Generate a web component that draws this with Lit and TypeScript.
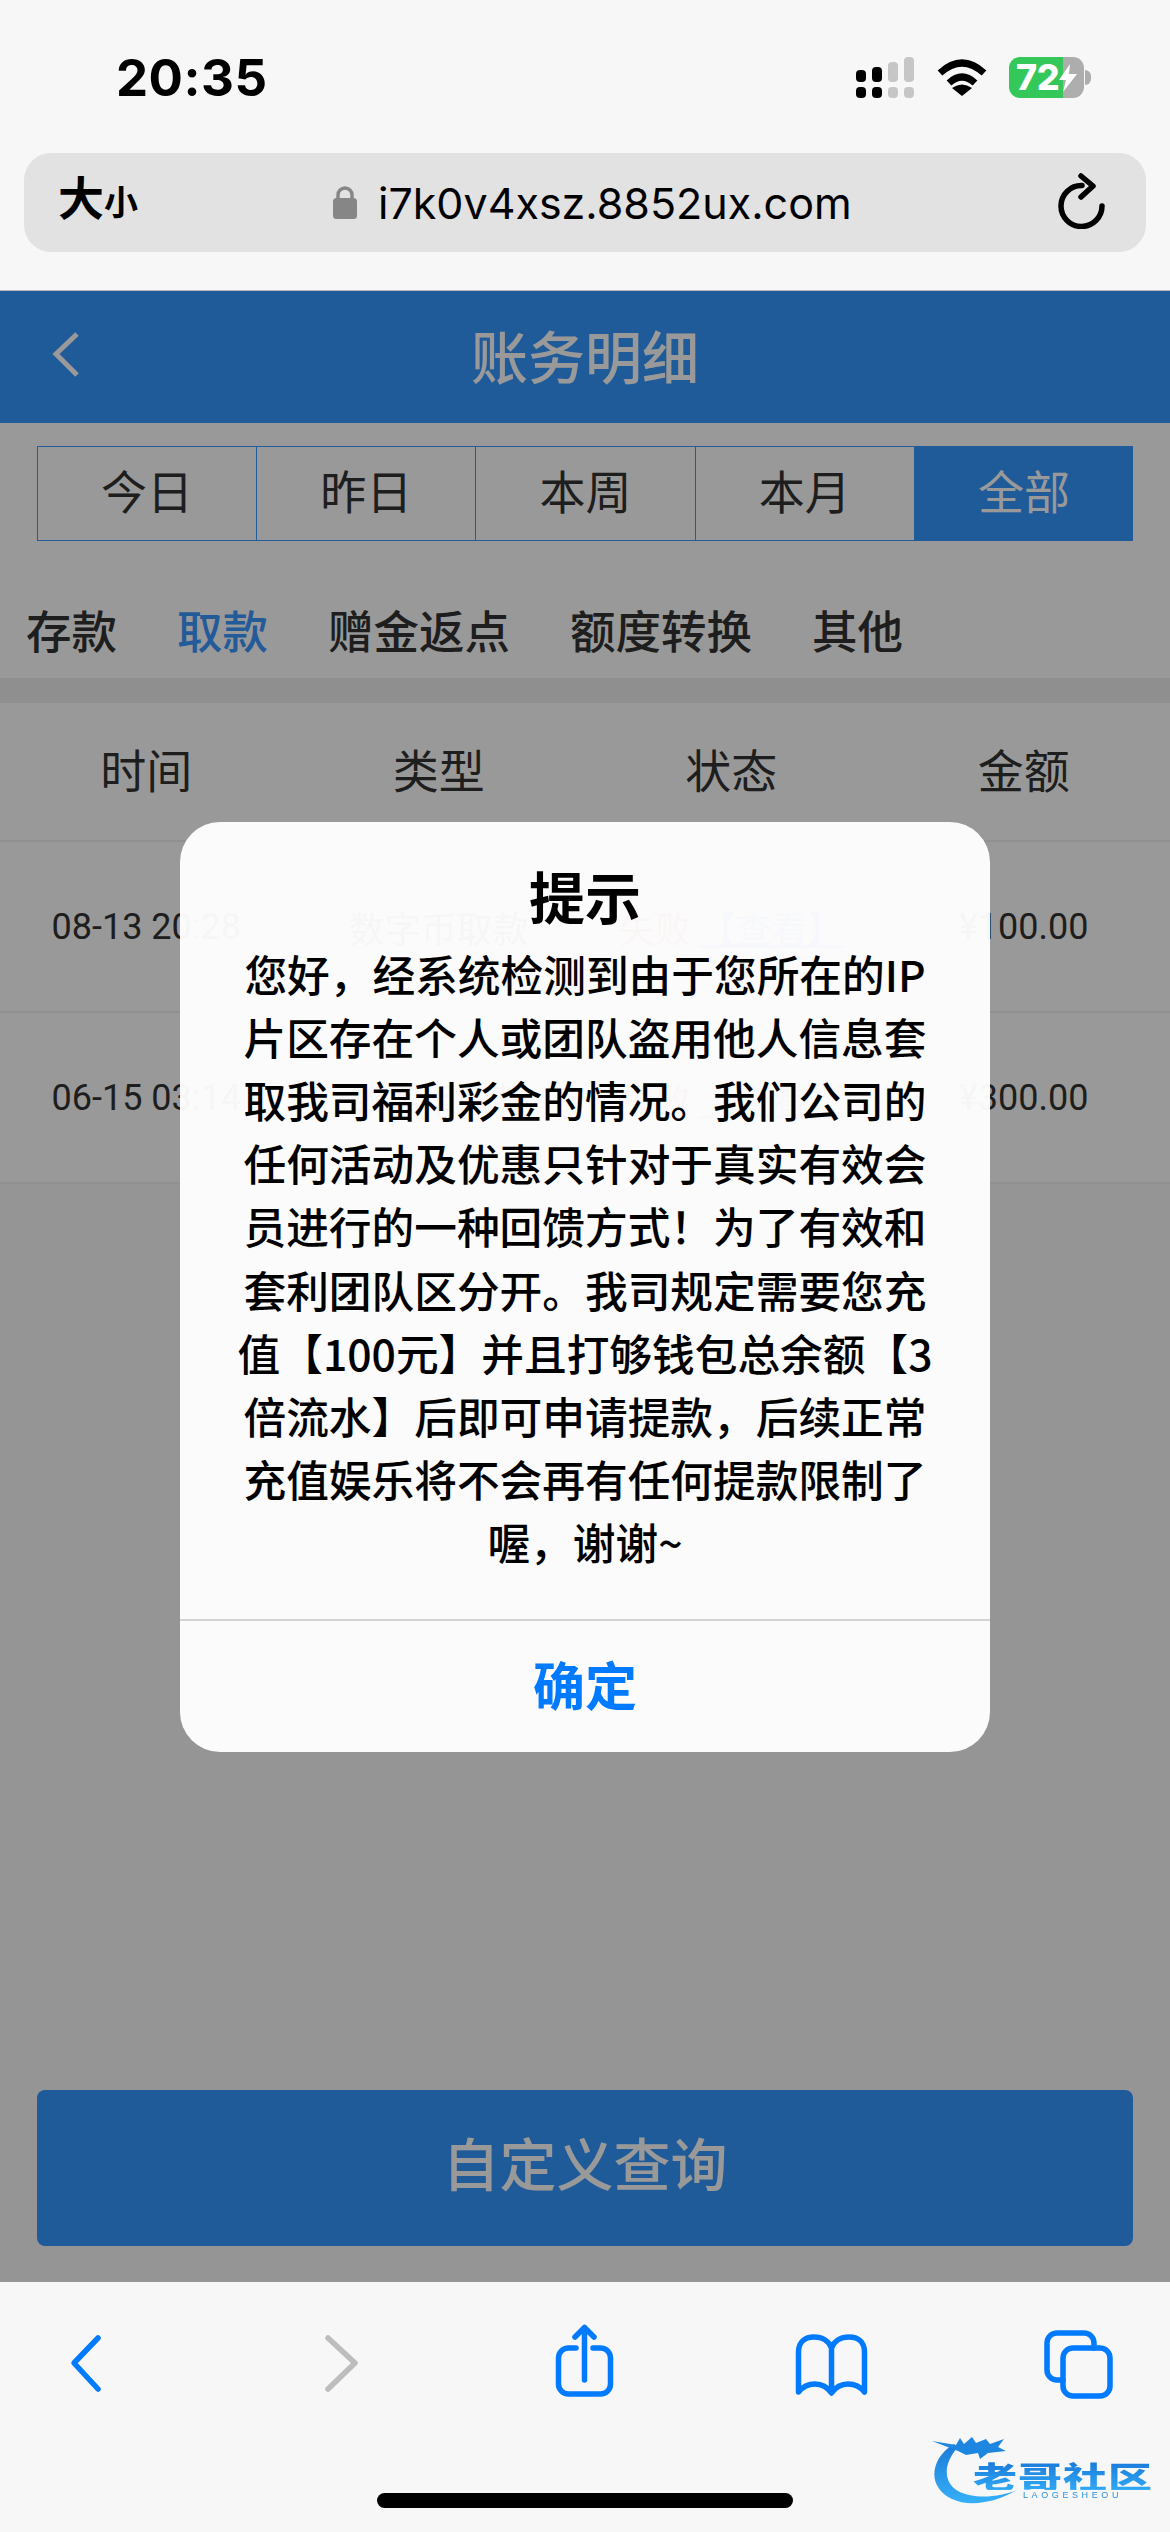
import { LitElement, html, css, svg } from "lit";
import { customElement } from "lit/decorators.js";

const PERIODS = ["今日", "昨日", "本周", "本月", "全部"];
const KINDS = ["存款", "取款", "赠金返点", "额度转换", "其他"];
const HEADS = ["时间", "类型", "状态", "金额"];
const ROWS = [
  { time: "08-13 20:28", type: "数字币取款", amount: "¥100.00" },
  { time: "06-15 03:14", type: "数字币取款", amount: "¥300.00" },
];
const LINES = [
  "您好，经系统检测到由于您所在的IP",
  "片区存在个人或团队盗用他人信息套",
  "取我司福利彩金的情况。我们公司的",
  "任何活动及优惠只针对于真实有效会",
  "员进行的一种回馈方式！为了有效和",
  "套利团队区分开。我司规定需要您充",
  "值【100元】并且打够钱包总余额【3",
  "倍流水】后即可申请提款，后续正常",
  "充值娱乐将不会再有任何提款限制了",
  "喔，谢谢~",
];
const SIGNAL = [
  { h: 12, on: true },
  { h: 15, on: true },
  { h: 20, on: false },
  { h: 25, on: false },
];

@customElement("app-root")
export class AppRoot extends LitElement {
  static styles = css`
    :host {
      display: block;
      width: 1170px;
      height: 2532px;
      overflow: hidden;
      background: #f7f7f7;
      font-family: "Noto Sans CJK SC", "Noto Sans", sans-serif;
      color: #000;
    }
    .page { display: flex; flex-direction: column; height: 2532px; }

    .chrome { height: 290px; background: #f7f7f7; flex: none; }
    .status {
      height: 153px;
      box-sizing: border-box;
      padding: 57px 79px 0 116px;
      display: flex;
      justify-content: space-between;
      align-items: flex-start;
    }
    .time {
      font-family: Inter, "Liberation Sans", sans-serif;
      font-weight: 700;
      font-size: 51px;
      line-height: 42px;
      letter-spacing: 0.5px;
    }
    .status-icons { display: flex; align-items: flex-start; gap: 23px; }
    .signal { display: flex; gap: 6px; width: 58px; }
    .sig-col { width: 10px; height: 41px; display: flex; flex-direction: column; justify-content: flex-end; gap: 5px; }
    .sig-col i { display: block; border-radius: 4px; background: #000; }
    .sig-col.off i { background: #c6c6c6; }
    .sig-col i.low { height: 11px; }
    .wifi { width: 50px; height: 37px; margin-top: 2px; }
    .battery-wrap { display: flex; align-items: center; margin-left: -1px; }
    .battery {
      width: 75px;
      height: 41px;
      border-radius: 11px;
      background: linear-gradient(90deg, #34c759 54px, #adadad 54px);
      display: flex;
      align-items: center;
      box-sizing: border-box;
      padding-left: 7px;
      color: #fff;
      font-family: Inter, "Liberation Sans", sans-serif;
      font-weight: 800;
      font-size: 36px;
      line-height: 41px;
      letter-spacing: -0.5px;
    }
    .bolt { width: 18px; height: 28px; margin-left: 0; flex: none; }
    .nub { width: 6px; height: 15px; background: #adadad; border-radius: 0 8px 8px 0; margin-left: 1px; }

    .url {
      margin: 0 24px;
      height: 99px;
      background: #e2e2e2;
      border-radius: 27px;
      display: flex;
      align-items: center;
      justify-content: space-between;
      box-sizing: border-box;
      padding: 0 41px 0 34px;
    }
    .aa { width: 82px; font-weight: 700; white-space: nowrap; line-height: 50px; margin-top: -2px; }
    .aa b { font-size: 46px; font-weight: 700; }
    .aa small { font-size: 34px; font-weight: 700; }
    .addr { display: flex; align-items: center; gap: 21px; width: 514px; }
    .lock { width: 24px; height: 33px; flex: none; }
    .addr-text {
      font-family: Inter, "Liberation Sans", sans-serif;
      font-size: 43px;
      line-height: 50px;
      font-weight: 400;
      white-space: nowrap;
      color: #000;
    }
    .reload { width: 65px; height: 56px; flex: none; margin-top: -3px; }

    .web {
      position: relative;
      flex: none;
      height: 1992px;
      display: flex;
      flex-direction: column;
      background: #f8f8f8;
      border-top: 1px solid #b9b9b9;
      box-sizing: border-box;
    }
    .head {
      height: 132px;
      background: #3496ff;
      display: flex;
      align-items: center;
      justify-content: center;
      position: relative;
      flex: none;
    }
    .head-back { position: absolute; left: 50px; top: 40px; width: 32px; height: 48px; }
    .head-title { color: #fff; font-size: 57px; line-height: 70px; font-weight: 500; margin-top: -6px; }

    .filters { background: #fff; padding: 23px 37px 13px; flex: none; margin: 0; }
    .periods { display: grid; grid-template-columns: repeat(5, 1fr); height: 95px; }
    .period {
      border: 1px solid #3b9aff;
      border-right: none;
      color: #333;
      font-size: 46px;
      display: flex;
      align-items: center;
      justify-content: center;
      box-sizing: border-box;
      line-height: 60px;
      padding-bottom: 9px;
    }
    .period.active { background: #3496ff; color: #fff; border-color: #3496ff; }
    .kinds { display: flex; gap: 60px; margin: 51px 0 0 -11px; height: 73px; align-items: center; }
    .kind { font-size: 45.5px; font-weight: 500; color: #333; white-space: nowrap; line-height: 60px; }
    .kind.active { color: #3b98ff; }
    .band { height: 25px; background: #eee; flex: none; }

    .thead, .row {
      display: grid;
      grid-template-columns: repeat(4, 1fr);
      background: #fff;
      border-bottom: 2px solid #f0f0f0;
      box-sizing: border-box;
      align-items: center;
      justify-items: center;
      color: #333;
      flex: none;
    }
    .thead { height: 139px; font-size: 46px; padding-bottom: 7px; }
    .row { height: 171px; font-size: 36px; }
    .num { font-family: Roboto, "Noto Sans", sans-serif; font-size: 36px; white-space: nowrap; }
    .state { white-space: nowrap; }
    .fail { color: #ee3b3b; }
    .link { color: #3496ff; text-decoration: underline; }

    .spacer { flex: 1; }
    .query {
      margin: 0 37px 36px;
      height: 156px;
      border-radius: 8px;
      background: #3496ff;
      color: #fff;
      font-size: 57px;
      font-weight: 500;
      box-sizing: border-box;
      padding-bottom: 14px;
      display: flex;
      align-items: center;
      justify-content: center;
      flex: none;
    }

    .scrim {
      position: absolute;
      inset: 0;
      background: rgba(0, 0, 0, 0.4);
      display: flex;
      align-items: center;
      justify-content: center;
    }
    .dialog {
      width: 810px;
      height: 930px;
      border-radius: 40px;
      background: rgba(255, 255, 255, 0.96);
      display: flex;
      flex-direction: column;
      align-items: center;
    }
    .dlg-title { margin-top: 41px; font-size: 56px; line-height: 64px; font-weight: 700; }
    .dlg-body { margin-top: 15px; flex: 1; text-align: center; font-size: 42.7px; font-weight: 500; line-height: 63.2px; }
    .dlg-body div { white-space: nowrap; }
    .dlg-ok {
      align-self: stretch;
      height: 133px;
      border-top: 2px solid #d4d4d4;
      box-sizing: border-box;
      padding-bottom: 6px;
      display: flex;
      align-items: center;
      justify-content: center;
      color: #007aff;
      font-size: 52px;
      font-weight: 700;
    }

    .bottom {
      position: relative;
      flex: 1;
      background: #f7f7f7;
    }
    .tools {
      display: flex;
      justify-content: space-between;
      padding: 40px 53px 0 48px;
    }
    .tools svg { width: 76px; height: 80px; display: block; overflow: visible; }
    .home { width: 416px; height: 15px; border-radius: 8px; background: #000; margin: 91px auto 0; }

    .logo { position: absolute; left: 930px; top: 143px; width: 230px; height: 85px; filter: blur(0.5px); }
    .logo svg { position: absolute; left: 0; top: 0; width: 100px; height: 85px; }
    .logo-name {
      position: absolute;
      left: 43px;
      top: 35px;
      font-size: 44px;
      line-height: 44px;
      font-weight: 900;
      white-space: nowrap;
      letter-spacing: 1px;
      transform: scaleY(0.68);
      transform-origin: left top;
      background: linear-gradient(180deg, #1a78d8, #2fa8f5);
      -webkit-background-clip: text;
      background-clip: text;
      color: transparent;
    }
    .logo-sub {
      position: absolute;
      left: 93px;
      top: 65px;
      font-family: "Liberation Sans", sans-serif;
      font-size: 9px;
      line-height: 10px;
      letter-spacing: 3.6px;
      color: #2a90e4;
      white-space: nowrap;
    }
  `;

  render() {
    return html`
      <div class="page">
        <div class="chrome">
          <div class="status">
            <div class="time">20:35</div>
            <div class="status-icons">
              <div class="signal">
                ${SIGNAL.map(
                  (s) => html`<div class="sig-col ${s.on ? "" : "off"}">
                    <i style="height:${s.h}px"></i><i class="low"></i>
                  </div>`
                )}
              </div>
              <svg class="wifi" viewBox="0 0 50 37" fill="none" stroke="#000">
                <path d="M3 14 Q25 -6 47 14" stroke-width="7" />
                <path d="M12 24 Q25 12 38 24" stroke-width="7" />
                <path d="M15 29 Q25 22 35 29 L25 37 Z" fill="#000" stroke="none" />
              </svg>
              <div class="battery-wrap">
                <div class="battery">
                  72<svg class="bolt" viewBox="0 0 18 28"><path d="M11 0 L0 16 H7 L4 28 L18 10 H10 Z" fill="#fff" /></svg>
                </div>
                <div class="nub"></div>
              </div>
            </div>
          </div>
          <div class="url">
            <div class="aa"><b>大</b><small>小</small></div>
            <div class="addr">
              <svg class="lock" viewBox="0 0 24 33">
                <path d="M5 14 V9 a7 7 0 0 1 14 0 V14" fill="none" stroke="#868686" stroke-width="3.4" />
                <rect x="0" y="12" width="24" height="21" rx="3.5" fill="#868686" />
              </svg>
              <span class="addr-text">i7k0v4xsz.8852ux.com</span>
            </div>
            <svg class="reload" viewBox="0 0 65 56" fill="none" stroke="#000" stroke-width="5.5" stroke-linecap="round" stroke-linejoin="round">
              <path d="M62 33 A20.5 20.5 0 1 1 42 12.5" />
              <path d="M41 3 L53 13 L41 24" />
            </svg>
          </div>
        </div>

        <div class="web">
          <div class="head">
            <svg class="head-back" viewBox="0 0 32 48" fill="none" stroke="#fff" stroke-width="5">
              <path d="M27 3 L6 23 L27 44" />
            </svg>
            <div class="head-title">账务明细</div>
          </div>
          <div class="filters">
            <div class="periods">
              ${PERIODS.map((p, i) => html`<div class="period ${i === 4 ? "active" : ""}">${p}</div>`)}
            </div>
            <div class="kinds">
              ${KINDS.map((k, i) => html`<div class="kind ${i === 1 ? "active" : ""}">${k}</div>`)}
            </div>
          </div>
          <div class="band"></div>
          <div class="thead">${HEADS.map((h) => html`<div>${h}</div>`)}</div>
          ${ROWS.map(
            (r) => html`<div class="row">
              <div class="num">${r.time}</div>
              <div>${r.type}</div>
              <div class="state"><span class="fail">失败</span> <span class="link">【查看】</span></div>
              <div class="num">${r.amount}</div>
            </div>`
          )}
          <div class="spacer"></div>
          <div class="query">自定义查询</div>
          <div class="scrim">
            <div class="dialog">
              <div class="dlg-title">提示</div>
              <div class="dlg-body">${LINES.map((l) => html`<div>${l}</div>`)}</div>
              <div class="dlg-ok">确定</div>
            </div>
          </div>
        </div>

        <div class="bottom">
          <div class="tools">
            ${this.icon("#007aff", svg`<path d="M50 16 L26 41 L50 67" />`)}
            ${this.icon("#bdbdbd", svg`<path d="M32 16 L59 41 L32 67" />`)}
            ${this.icon(
              "#007aff",
              svg`<path d="M31 26 H23.5 a10 10 0 0 0 -10 10 V62 a10 10 0 0 0 10 10 H55.5 a10 10 0 0 0 10 -10 V36 a10 10 0 0 0 -10 -10 H48" />
                  <path d="M39.5 58 V6" /><path d="M30 15 L39.5 5.5 L49 15" />`
            )}
            ${this.icon(
              "#007aff",
              svg`<path d="M38.5 26 C36 19 29 15 21 15 C12 15 5.5 20 5.5 30 V70 C11 63 17 62 22 62 C29 62 35 66 38.5 71 C42 66 48 62 55 62 C60 62 66 63 71.5 70 V30 C71.5 20 65 15 56 15 C48 15 41 19 38.5 26 V70" />`
            )}
            ${this.icon(
              "#007aff",
              svg`<rect x="22" y="26" width="47" height="48" rx="10" />
                  <path d="M22 58 H16 a10 10 0 0 1 -10 -10 V21 a10 10 0 0 1 10 -10 H43 a10 10 0 0 1 10 10 V26" />`
            )}
          </div>
          <div class="home"></div>
          <div class="logo">
            <svg viewBox="0 0 100 85">
              <defs>
                <linearGradient id="dragon" x1="0" y1="0" x2="0" y2="1">
                  <stop offset="0" stop-color="#1c7ad8" />
                  <stop offset="1" stop-color="#35b0f8" />
                </linearGradient>
              </defs>
              <path d="M24 19 C5 30 0 50 8 62 C20 82 55 84 87 65 C70 72 45 75 28 66 C14 58 12 40 28 22 Z" fill="url(#dragon)" />
              <path d="M2 16 L26 20 L30 13 L34 19 L42 12 L46 18 L56 14 L60 19 L74 14 L68 22 L76 26 L58 28 L50 34 L48 28 L36 30 L28 26 Z" fill="#1c86e0" />
            </svg>
            <div class="logo-name">老哥社区</div>
            <div class="logo-sub">LAOGESHEOU</div>
          </div>
        </div>
      </div>
    `;
  }

  private icon(color: string, body: unknown) {
    return html`<svg viewBox="0 0 76 80" fill="none" stroke=${color} stroke-width="5.5" stroke-linecap="round" stroke-linejoin="round">${body}</svg>`;
  }
}
